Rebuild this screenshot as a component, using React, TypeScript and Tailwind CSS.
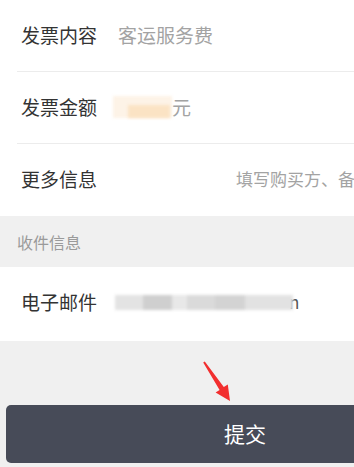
const font = { fontFamily: '"Noto Sans CJK SC", "Noto Sans", sans-serif' };

function Row({ label, children, divider = true }: { label: string; children?: React.ReactNode; divider?: boolean }) {
  return (
    <div className="relative flex h-[72px] items-center bg-white pb-[2px] pl-[21px]">
      <span className="w-[97px] shrink-0 text-[19px] text-[#333]">{label}</span>
      {children}
      {divider && <div className="absolute bottom-0 left-[17px] right-0 h-px bg-[#ececec]" />}
    </div>
  );
}

export default function App() {
  return (
    <div className="relative h-[467px] w-[354px] overflow-hidden bg-[#f0f0f0]" style={font}>
      <div className="w-[490px]">
        <Row label="发票内容">
          <span className="text-[19px] text-[#a3a3a3]">客运服务费</span>
        </Row>
        <Row label="发票金额">
          <div className="relative -ml-[5px] h-[22px] w-[59px]">
            <div className="absolute inset-0 bg-[#fdf3e7] blur-[1.5px]" />
            <div className="absolute bottom-0 left-[15px] right-[2px] h-[13px] bg-[#fbe3c4] blur-[1.5px]" />
          </div>
          <span className="text-[19px] text-[#a3a3a3]">元</span>
        </Row>
        <Row label="更多信息" divider={false}>
          <span className="ml-[118px] whitespace-nowrap text-[17px] text-[#a3a3a3]">填写购买方、备注等信息</span>
        </Row>
        <div className="flex h-[51px] items-center pl-[17px] text-[16px] text-[#9a9a9a]">收件信息</div>
        <Row label="电子邮件" divider={false}>
          <div className="-ml-[3px] flex h-[15px] w-[178px] blur-[1.5px]">
            <div className="w-[28px] bg-[#e3e3e3]" />
            <div className="w-[29px] bg-[#cfcfcf]" />
            <div className="w-[15px] bg-[#e8e8e8]" />
            <div className="w-[28px] bg-[#dadada]" />
            <div className="w-[30px] bg-[#d3d3d3]" />
            <div className="w-[48px] bg-[#e2e2e2]" />
          </div>
          <span className="-ml-[4px] text-[17px] text-[#555]">n</span>
        </Row>
        <div className="h-[2px] bg-white" />
        <div className="pl-[6px] pt-[64px]">
          <button className="flex h-[58px] w-[478px] items-center justify-center rounded-[5px] bg-[#474b58] text-[21px] text-white">
            提交
          </button>
        </div>
      </div>
      <svg className="absolute left-[196px] top-[355px] h-[52px] w-[40px]" viewBox="196 355 40 52">
        <polygon
          points="203.2,362.6 219.6,389.9 215.6,392.6 230,401 227.8,384.5 223.8,387.1 204.8,361.4"
          fill="#f22f2f"
        />
      </svg>
    </div>
  );
}
